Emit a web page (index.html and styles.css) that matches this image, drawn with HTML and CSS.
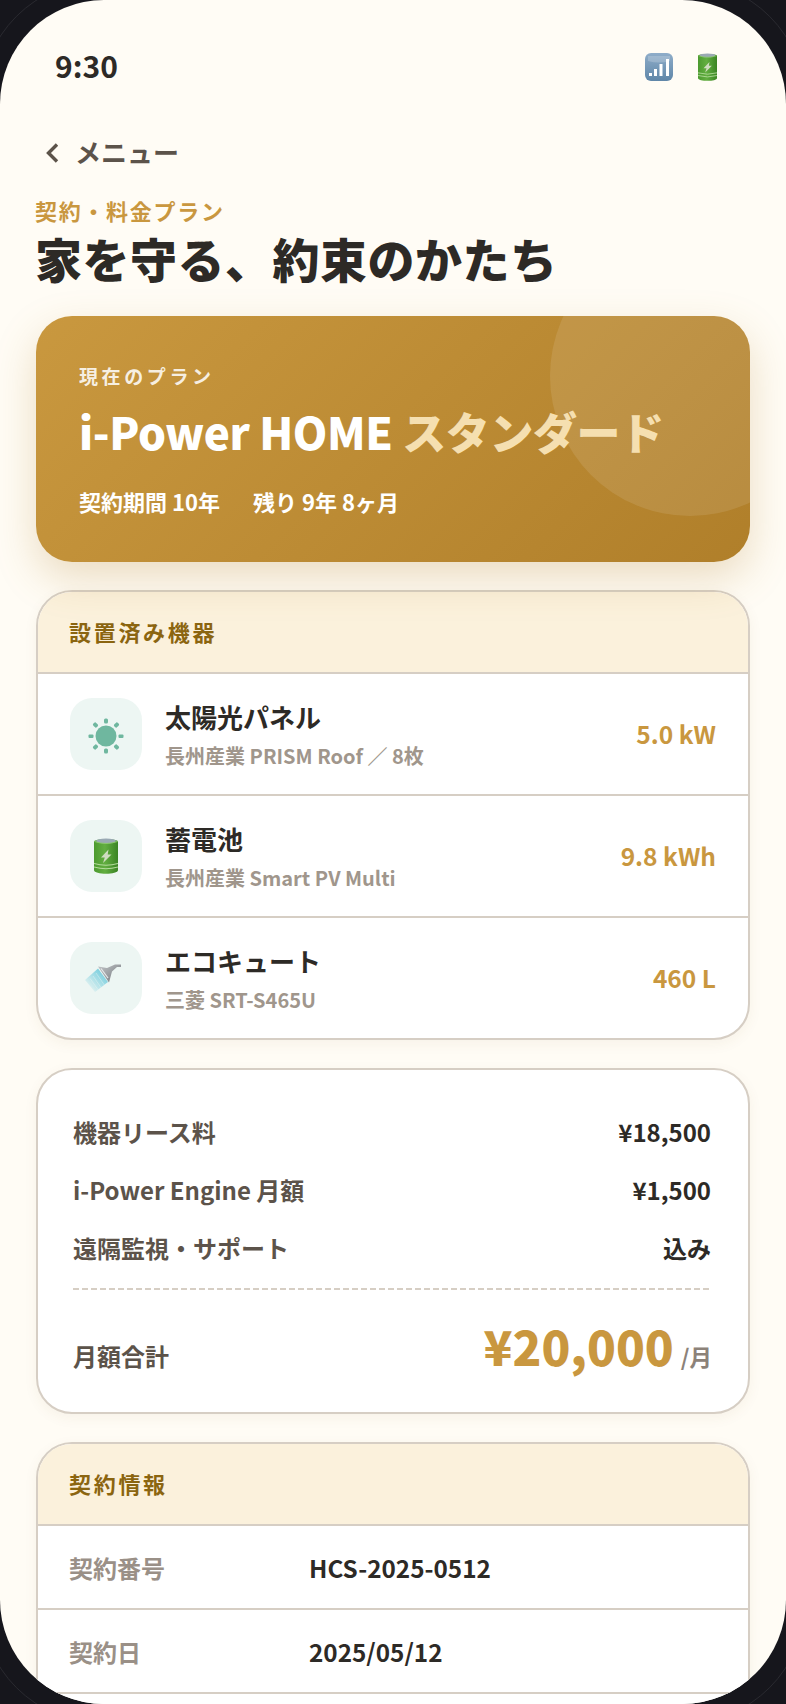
FILE: index.html
```html
<!DOCTYPE html>
<html lang="ja">
<head>
  <meta charset="UTF-8">
  <meta name="viewport" content="width=device-width, initial-scale=1.0">
  <title>契約・料金プラン</title>
  <link rel="stylesheet" href="styles.css">
</head>
<body>
  <div class="phone">
    <div class="screen">
      <div class="status-bar">
        <span class="time">9:30</span>
        <div class="status-icons">
          <svg class="icon-signal" viewBox="0 0 28 28" aria-hidden="true">
            <defs>
              <linearGradient id="sig" x1="0" y1="0" x2="0" y2="1">
                <stop offset="0" stop-color="#8fadc9"/>
                <stop offset="1" stop-color="#5f86a8"/>
              </linearGradient>
            </defs>
            <rect width="28" height="28" rx="6" fill="url(#sig)"/>
            <path d="M3 3h22v5q-11 3-22 0z" fill="#fff" opacity=".2"/>
            <g fill="#fff">
              <rect x="4" y="20" width="3" height="3"/>
              <rect x="9" y="16" width="3" height="7"/>
              <rect x="14.500" y="11" width="3" height="12"/>
              <rect x="21" y="6" width="3" height="17"/>
            </g>
          </svg>
          <svg class="icon-battery small" viewBox="0 0 24 36" preserveAspectRatio="none" aria-hidden="true"><use href="#battery"/></svg>
        </div>
      </div>

      <main class="content">
        <a class="back" href="#">
          <svg viewBox="0 0 14 20" aria-hidden="true"><path d="M12 1.500 3.500 10 12 18.500" fill="none" stroke="currentColor" stroke-width="3.400"/></svg>
          <span>メニュー</span>
        </a>
        <p class="eyebrow">契約・料金プラン</p>
        <h1 class="page-title">家を守る、約束のかたち</h1>

        <section class="plan-card">
          <p class="plan-label">現在のプラン</p>
          <h2 class="plan-name">i-Power HOME <span>スタンダード</span></h2>
          <div class="plan-meta">
            <span>契約期間 10年</span>
            <span>残り 9年 8ヶ月</span>
          </div>
        </section>

        <section class="card">
          <h3 class="card-head">設置済み機器</h3>
          <div class="device">
            <div class="device-icon">
              <svg viewBox="0 -2 36 36" width="36" height="36" overflow="visible" aria-hidden="true">
                <g fill="#6fb79f">
                  <circle cx="18" cy="18" r="10.500"/>
                  <rect x="16" y="0.500" width="4" height="5" rx="1.500"/>
                  <rect x="16" y="30.500" width="4" height="5" rx="1.500"/>
                  <rect x="0.500" y="16.500" width="5" height="3.500" rx="1"/>
                  <rect x="30.500" y="16.500" width="5" height="3.500" rx="1"/>
                  <rect x="5.500" y="4.500" width="4" height="5" rx="1.500" transform="rotate(-45 7.500 7)"/>
                  <rect x="26.500" y="4.500" width="4" height="5" rx="1.500" transform="rotate(45 28.500 7)"/>
                  <rect x="5.500" y="26.500" width="4" height="5" rx="1.500" transform="rotate(45 7.500 29)"/>
                  <rect x="26.500" y="26.500" width="4" height="5" rx="1.500" transform="rotate(-45 28.500 29)"/>
                </g>
              </svg>
            </div>
            <div class="device-info">
              <strong>太陽光パネル</strong>
              <small>長州産業 PRISM Roof ／ 8枚</small>
            </div>
            <span class="device-value">5.0 kW</span>
          </div>
          <div class="device">
            <div class="device-icon">
              <svg class="icon-battery" viewBox="0 0 24 36" aria-hidden="true">
                <defs>
                  <linearGradient id="bat" x1="0" y1="0" x2="1" y2="0">
                    <stop offset="0" stop-color="#4c9a2f"/>
                    <stop offset=".45" stop-color="#62ae40"/>
                    <stop offset="1" stop-color="#3b8424"/>
                  </linearGradient>
                  <g id="battery">
                    <path d="M0 3.500C0 .5 24 .5 24 3.500V32C24 37 0 37 0 32z" fill="url(#bat)"/>
                    <ellipse cx="12" cy="3" rx="10" ry="2.400" fill="#9aa9b3"/>
                    <path d="M.5 3.500Q12 7.500 23.500 3.500" fill="none" stroke="#8bc96a" stroke-width="1"/>
                    <path d="M14.500 11.500 7 19.500h3.800L9 25 17.500 16.500h-3.800z" fill="#cfdcc0"/>
                    <path d="M0 25.500Q12 29 24 25.500M0 29Q12 32.500 24 29" fill="none" stroke="#b4dc9c" stroke-width="1.100"/>
                  </g>
                </defs>
                <use href="#battery"/>
              </svg>
            </div>
            <div class="device-info">
              <strong>蓄電池</strong>
              <small>長州産業 Smart PV Multi</small>
            </div>
            <span class="device-value">9.8 kWh</span>
          </div>
          <div class="device">
            <div class="device-icon">
              <svg viewBox="0 0 36 36" width="36" height="36" overflow="visible" aria-hidden="true">
                <defs>
                  <linearGradient id="spray" x1="1" y1="0" x2="0" y2="1">
                    <stop offset=".2" stop-color="#6fcbdc" stop-opacity=".9"/>
                    <stop offset=".9" stop-color="#6fcbdc" stop-opacity="0"/>
                  </linearGradient>
                  <linearGradient id="head" x1="0" y1="0" x2="1" y2="1">
                    <stop offset="0" stop-color="#c4c7c9"/>
                    <stop offset="1" stop-color="#70757a"/>
                  </linearGradient>
                </defs>
                <path d="M10 8.500 20 22 7 32-3 20z" fill="url(#spray)"/>
                <path d="M8 13 17 26M5 16 14 29M2 18.500 11 31" stroke="#edf6f3" stroke-width=".7" opacity=".6"/>
                <path d="M10 6.500 19 8 27 4.500H33V7H29L24 11.500 21 22.500z" fill="url(#head)"/>
                <path d="M13 8.500 20 18" stroke="#e8eaeb" stroke-width="1.200"/>
              </svg>
            </div>
            <div class="device-info">
              <strong>エコキュート</strong>
              <small>三菱 SRT-S465U</small>
            </div>
            <span class="device-value">460 L</span>
          </div>
        </section>

        <section class="card fee-card">
          <div class="fee-row"><span>機器リース料</span><b>¥18,500</b></div>
          <div class="fee-row"><span>i-Power Engine 月額</span><b>¥1,500</b></div>
          <div class="fee-row"><span>遠隔監視・サポート</span><b>込み</b></div>
          <div class="fee-total">
            <span>月額合計</span>
            <div class="total-price"><b>¥20,000</b><small>/月</small></div>
          </div>
        </section>

        <section class="card">
          <h3 class="card-head">契約情報</h3>
          <div class="info-row"><span>契約番号</span><b>HCS-2025-0512</b></div>
          <div class="info-row"><span>契約日</span><b>2025/05/12</b></div>
          <div class="info-row"></div>
        </section>
      </main>
    </div>
  </div>
</body>
</html>
```

FILE: styles.css
```css
* { margin: 0; padding: 0; box-sizing: border-box; }

html, body { height: 100%; overflow: hidden; }

body {
  font-family: "Noto Sans CJK JP", "Noto Sans", sans-serif;
  background: #16161c;
  color: #2d2a26;
}

.phone {
  width: 786px; height: 1704px;
  background: #16161c;
  position: relative;
  overflow: hidden;
}

/* edge of the device body, only seen in the corners */
.phone::before {
  content: "";
  position: absolute; top: -20px; right: -20px; bottom: -20px; left: -20px;
  border: 1px solid #2a2a30;
  border-radius: 123px;
}

.screen {
  width: 100%; height: 100%;
  background: #fffcf5;
  border-radius: 104px;
  overflow: hidden;
  position: relative;
}

.status-bar {
  height: 131px;
  padding: 0 69px 2px 55px;
  display: flex; justify-content: space-between; align-items: center;
}

.time { font-size: 30px; font-weight: 700; line-height: 1; }

.status-icons { display: flex; align-items: center; gap: 25px; margin-top: 4px; }
.icon-signal { width: 28px; height: 28px; display: block; }
.icon-battery { width: 24px; height: 36px; display: block; }
.icon-battery.small { width: 19px; height: 28px; }

.content { padding: 0 36px; }

.back {
  display: flex; align-items: center; gap: 16px;
  padding-left: 9px; height: 40px; margin-bottom: 23px;
  color: #5c534a; text-decoration: none;
  font-size: 26px; font-weight: 700;
}
.back svg { width: 14px; height: 20px; margin-top: 3px; }

.eyebrow {
  font-size: 22px; font-weight: 700; line-height: 32px;
  letter-spacing: 1.700px;
  color: #c9973f;
  margin-left: -1px;
}

.page-title {
  font-size: 47px; font-weight: 900; line-height: 64px;
  letter-spacing: .5px;
  margin: 0 0 26px -1px;
}

.plan-card {
  height: 246px;
  padding: 46px 43px 0;
  border-radius: 36px;
  background: linear-gradient(135deg, #c9983f, #b07f2a);
  box-shadow: 0 16px 40px rgba(176, 127, 42, .25);
  color: #fff;
  position: relative;
  overflow: hidden;
  margin-bottom: 28px;
}

.plan-card::after {
  content: "";
  position: absolute; top: -80px; right: -80px;
  width: 280px; height: 280px;
  border-radius: 50%;
  background: rgba(255, 255, 255, .1);
}

.plan-label {
  font-size: 19px; font-weight: 700; line-height: 28px;
  letter-spacing: 3.600px;
  opacity: .85;
}

.plan-name {
  font-size: 44px; font-weight: 800; line-height: 68px;
  letter-spacing: -.4px;
  margin: 7px 0 20px;
  position: relative; z-index: 1;
}
.plan-name span { color: #f5dfb0; }

.plan-meta {
  display: flex; gap: 33px;
  font-size: 22px; font-weight: 700; line-height: 32px;
  position: relative; z-index: 1;
}

.card {
  background: #fff;
  border: 2px solid #d6cec4;
  border-radius: 36px;
  box-shadow: 0 4px 14px rgba(120, 90, 40, .06);
  overflow: hidden;
  margin-bottom: 28px;
}

.card-head {
  height: 80px;
  padding: 0 0 2px 31px;
  display: flex; align-items: center;
  background: #fbf1dc;
  font-size: 22px; font-weight: 700;
  letter-spacing: 2.700px;
  color: #8b6510;
}

.device {
  height: 122px;
  padding: 0 32px;
  border-top: 2px solid #d6cec4;
  display: flex; align-items: center; gap: 23px;
}

.device-icon {
  width: 72px; height: 72px; flex: none;
  border-radius: 22px;
  background: #edf6f3;
  display: flex; align-items: center; justify-content: center;
}

.device-info { flex: 1; display: flex; flex-direction: column; }
.device-info strong { font-size: 26px; font-weight: 700; line-height: 36px; }
.device-info small { font-size: 20px; font-weight: 700; line-height: 28px; color: #a0968c; margin-top: 7px; }

.device-value { font-size: 24.500px; font-weight: 700; color: #c9973f; margin-top: -2px; }

.fee-card { padding: 32px 37px 32px 35px; }

.fee-row {
  height: 58px;
  display: flex; justify-content: space-between; align-items: center;
  font-size: 24px; color: #5c534a; font-weight: 600;
}
.fee-row b { color: #2d2a26; font-weight: 700; }

.fee-total {
  margin-top: 12px;
  padding-top: 24px;
  background: repeating-linear-gradient(90deg, #d6cec4 0 6px, transparent 6px 9px) top / 100% 2px no-repeat;
  display: flex; justify-content: space-between; align-items: baseline;
  font-size: 24px; color: #5c534a; font-weight: 600;
}

.total-price { margin-right: -1px; }
.total-price b { font-size: 47.500px; font-weight: 800; color: #c9973f; line-height: 68px; }
.total-price small { font-size: 22.500px; font-weight: 600; color: #8c8279; margin-left: 7px; }

.info-row {
  height: 84px;
  padding: 0 31px;
  border-top: 2px solid #d6cec4;
  display: flex; align-items: center;
  font-size: 24px;
}
.info-row span { width: 240px; font-weight: 700; color: #9a9087; }
.info-row b { font-size: 24.300px; font-weight: 700; }
```
